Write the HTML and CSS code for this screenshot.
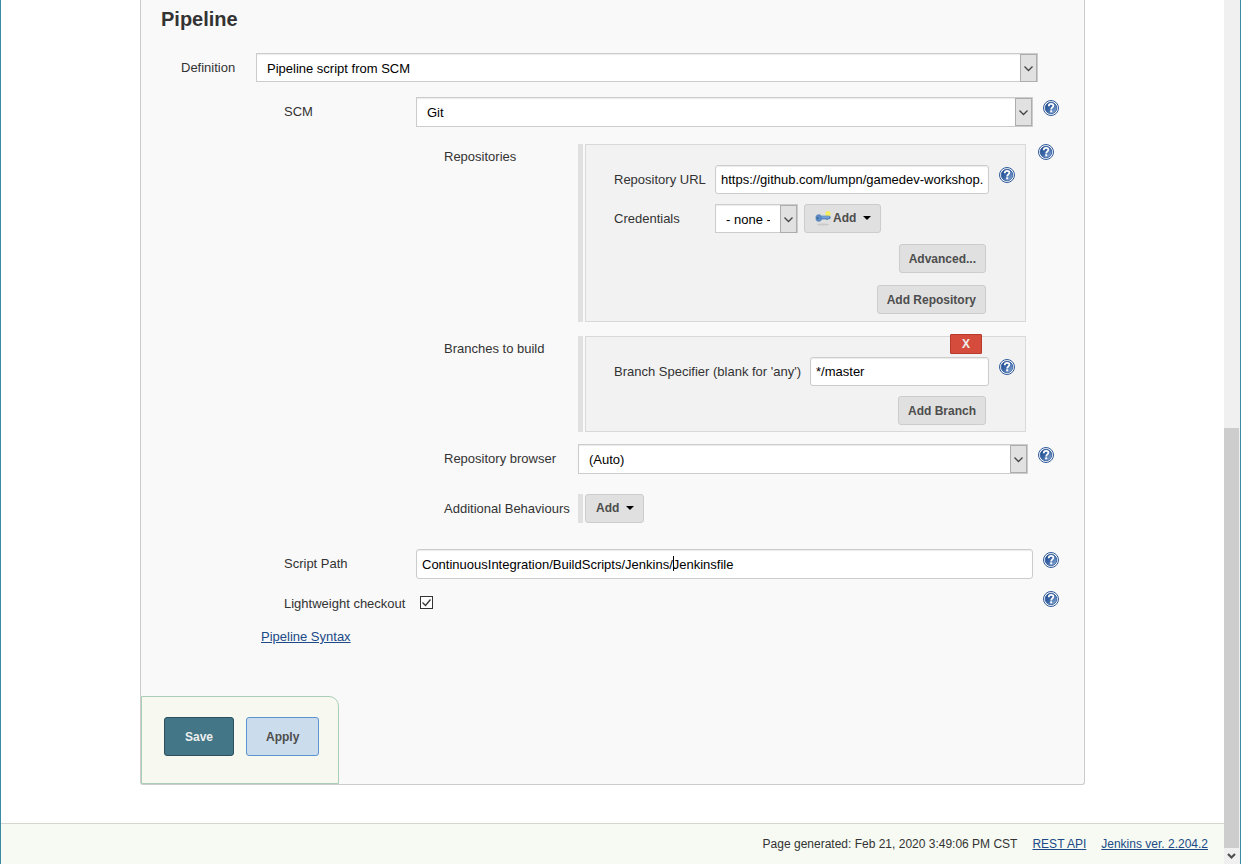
FILE: index.html
```html
<!DOCTYPE html>
<html lang="en">
<head>
    <meta charset="UTF-8">
    <meta name="viewport" content="width=device-width, initial-scale=1.0">
    <title>Config [Jenkins]</title>
    <link rel="stylesheet" href="styles.css">
</head>
<body>
    <!-- Shared icons -->
    <svg class="sprite" width="0" height="0" aria-hidden="true">
        <defs>
            <linearGradient id="help-fill" x1="0" y1="0" x2="1" y2="1">
                <stop offset="0" stop-color="#1c4587" />
                <stop offset="0.5" stop-color="#3c68a8" />
                <stop offset="1" stop-color="#9dbbe0" />
            </linearGradient>
        </defs>
        <symbol id="icon-help" viewBox="0 0 16 16">
            <circle cx="8" cy="8" r="7.5" fill="#fff" stroke="#2f5a9b" />
            <circle cx="8" cy="8" r="5.8" fill="url(#help-fill)" stroke="#2f5a9b" stroke-width="0.8" />
            <path d="M5.700 6.200C5.800 4.500 6.800 3.900 8.100 3.900c1.400 0 2.300.7 2.300 1.900 0 1.600-2.200 1.700-2.200 3.600" fill="none" stroke="#fff" stroke-width="1.800" />
            <rect x="7.200" y="10.300" width="2" height="2" fill="#fff" />
        </symbol>
        <symbol id="icon-arrow" viewBox="0 0 17 28">
            <rect x="0.5" y="0.5" width="16" height="27" fill="#e1e1e1" stroke="#adadad" />
            <path d="M4.5 12.5l4 4 4-4" fill="none" stroke="#444" stroke-width="1.3" />
        </symbol>
    </svg>

    <div class="page">
        <main class="content">
            <form class="config" onsubmit="return false">
                <h2>Pipeline</h2>

                <div class="row definition">
                    <label class="label" for="definition">Definition</label>
                    <span class="select">
                        <select id="definition"><option>Pipeline script from SCM</option></select>
                        <svg class="arrow"><use href="#icon-arrow" /></svg>
                    </span>
                </div>

                <div class="row level-1 scm">
                    <label class="label" for="scm">SCM</label>
                    <span class="select tall">
                        <select id="scm"><option>Git</option></select>
                        <svg class="arrow"><use href="#icon-arrow" /></svg>
                    </span>
                    <a class="help" href="#" aria-label="Help for SCM"><svg><use href="#icon-help" /></svg></a>
                </div>

                <div class="row level-2 repositories">
                    <span class="label">Repositories</span>
                    <div class="repeat">
                        <div class="panel">
                            <div class="field">
                                <label class="label" for="url">Repository URL</label>
                                <input class="text" id="url" type="text" value="https://github.com/lumpn/gamedev-workshop.git">
                                <a class="help" href="#" aria-label="Help for Repository URL"><svg><use href="#icon-help" /></svg></a>
                            </div>
                            <div class="field credentials">
                                <label class="label" for="credentials">Credentials</label>
                                <span class="select small">
                                    <select id="credentials"><option>- none -</option></select>
                                    <svg class="arrow"><use href="#icon-arrow" /></svg>
                                </span>
                                <button class="btn menu" type="button">
                                    <svg class="key" viewBox="0 0 16 16" aria-hidden="true">
                                        <ellipse cx="8" cy="14.5" rx="6" ry="1" fill="#c9c9c9" />
                                        <circle cx="13" cy="3.5" r="2.6" fill="#f5ee62" />
                                        <path d="M1 6.500C1.500 4.500 5 4 6.500 6H14.500L15.500 7.500 14.500 9H13L12 10 11 9H7C6 12 1.500 12 1 9.500Z" fill="#5c8cc4" stroke="#4a78b0" stroke-width="0.6" />
                                        <circle cx="2.7" cy="8" r="1" fill="#3b659a" />
                                        <path d="M7 7H14" stroke="#8bb3e0" />
                                    </svg>
                                    Add
                                    <span class="caret"></span>
                                </button>
                            </div>
                            <div class="actions"><button class="btn" type="button">Advanced...</button></div>
                            <div class="actions last"><button class="btn" type="button">Add Repository</button></div>
                        </div>
                    </div>
                    <a class="help" href="#" aria-label="Help for Repositories"><svg><use href="#icon-help" /></svg></a>
                </div>

                <div class="row level-2 branches">
                    <span class="label">Branches to build</span>
                    <div class="repeat">
                        <div class="panel">
                            <button class="delete" type="button">X</button>
                            <div class="field">
                                <label class="label" for="branch">Branch Specifier (blank for 'any')</label>
                                <input class="text" id="branch" type="text" value="*/master">
                                <a class="help" href="#" aria-label="Help for Branch Specifier"><svg><use href="#icon-help" /></svg></a>
                            </div>
                            <div class="actions"><button class="btn" type="button">Add Branch</button></div>
                        </div>
                    </div>
                    <span class="help"></span>
                </div>

                <div class="row level-2 browser">
                    <label class="label" for="browser">Repository browser</label>
                    <span class="select tall">
                        <select id="browser"><option>(Auto)</option></select>
                        <svg class="arrow"><use href="#icon-arrow" /></svg>
                    </span>
                    <a class="help" href="#" aria-label="Help for Repository browser"><svg><use href="#icon-help" /></svg></a>
                </div>

                <div class="row level-2 behaviours">
                    <span class="label">Additional Behaviours</span>
                    <div class="repeat">
                        <button class="btn menu" type="button">Add <span class="caret"></span></button>
                    </div>
                </div>

                <div class="row level-1 script-path">
                    <label class="label" for="script-path">Script Path</label>
                    <span class="editing">
                        <input class="text" id="script-path" type="text" value="ContinuousIntegration/BuildScripts/Jenkins/Jenkinsfile">
                        <span class="cursor"></span>
                    </span>
                    <a class="help" href="#" aria-label="Help for Script Path"><svg><use href="#icon-help" /></svg></a>
                </div>

                <div class="row level-1 lightweight">
                    <label class="label" for="lightweight">Lightweight checkout</label>
                    <span class="check">
                        <input id="lightweight" type="checkbox" checked>
                        <svg viewBox="0 0 13 13"><path d="M2.5 6.5l3 3 5-6" fill="none" stroke="#333" stroke-width="1.3" /></svg>
                    </span>
                    <a class="help" href="#" aria-label="Help for Lightweight checkout"><svg><use href="#icon-help" /></svg></a>
                </div>

                <a class="syntax" href="#">Pipeline Syntax</a>

                <div class="save-bar">
                    <button class="submit primary" type="submit">Save</button>
                    <button class="submit" type="button">Apply</button>
                </div>
            </form>
            <footer>
                <span>Page generated: Feb 21, 2020 3:49:06 PM CST</span>
                <a href="#">REST API</a>
                <a href="#">Jenkins ver. 2.204.2</a>
            </footer>
        </main>

        <div class="scrollbar" aria-hidden="true">
            <div class="thumb"></div>
            <svg class="down" viewBox="0 0 15 16"><path d="M4 6l3.5 3.5L11 6" fill="none" stroke="#505050" stroke-width="2.2" /></svg>
        </div>
    </div>
</body>
</html>
```
FILE: styles.css
```css
* {
    box-sizing: border-box;
}

body {
    margin: 0;
    background-color: #fff;
    color: #333;
    font-family: "Liberation Sans", Arial, Helvetica, sans-serif;
    font-size: 13px;
}

.sprite {
    position: absolute;
}

.page {
    display: flex;
    min-height: 100vh;
    border-left: 1px solid #3a8ba3;
    border-right: 1px solid #3a8ba3;
}

.content {
    flex: 1;
    min-width: 0;
    display: flex;
    flex-direction: column;
    justify-content: space-between;
}

a {
    color: #204a87;
}

/* Form */
.config {
    margin: 0 139px;
    background-color: #f9f9f9;
    border: 1px solid #ccc;
    border-top: none;
    border-radius: 0 0 3px 3px;
}

h2 {
    margin: 0;
    padding: 7px 20px 0;
    font-size: 20px;
    line-height: 24px;
}

.row {
    display: flex;
    align-items: flex-start;
    margin-right: 30px;
}

.label {
    flex: none;
    line-height: 29px;
}

.definition {
    margin: 22px 46px 0 40px;
}

.definition .label {
    width: 75px;
}

.level-1 {
    margin-left: 143px;
    margin-right: 25px;
}

.level-1 > .label {
    width: 132px;
}

.level-2 {
    margin-left: 303px;
}

.level-2 > .label {
    width: 134px;
}

.scm {
    margin-top: 15px;
}

.repositories {
    margin-top: 17px;
}

.branches {
    margin-top: 14px;
}

.repositories > .label,
.branches > .label {
    line-height: 25px;
}

.browser {
    margin-top: 12px;
}

.behaviours {
    margin-top: 20px;
}

.script-path {
    margin-top: 26px;
}

.lightweight {
    margin-top: 10px;
}

/* Help links */
.help {
    flex: none;
    width: 16px;
    height: 16px;
    margin: 3px 0 0 10px;
}

.help svg {
    display: block;
    width: 16px;
    height: 16px;
}

.repositories > .help {
    margin-top: 0;
}

.field .help {
    margin-top: 2px;
}

/* Drop-downs */
.select {
    flex: 1;
    display: grid;
    height: 29px;
}

.select.tall {
    height: 30px;
}

.select.small {
    flex: none;
    width: 83px;
}

.select select,
.arrow {
    grid-area: 1 / 1;
}

.select select {
    appearance: none;
    width: 100%;
    padding: 1px 27px 0 10px;
    border: 1px solid #ccc;
    border-radius: 0;
    background-color: #fff;
    box-shadow: inset 0 1px 1px rgba(0, 0, 0, 0.08);
    color: #000;
    font: inherit;
}

.arrow {
    justify-self: end;
    align-self: center;
    width: 17px;
    height: 28px;
    margin-right: 1px;
    pointer-events: none;
}

/* Text boxes */
.text {
    flex: 1;
    width: 100%;
    min-width: 0;
    height: 29px;
    padding: 0 5px;
    border: 1px solid #ccc;
    border-radius: 3px;
    background-color: #fff;
    box-shadow: inset 0 1px 1px rgba(0, 0, 0, 0.08);
    color: #000;
    font: inherit;
}

.editing {
    position: relative;
    flex: 1;
}

.editing .text {
    display: block;
    height: 30px;
}

.cursor {
    position: absolute;
    left: 257px;
    top: 7px;
    width: 1px;
    height: 15px;
    background-color: #000;
}

/* Repeatable blocks */
.repeat {
    flex: 1;
    padding-left: 2px;
    border-left: 5px solid #e0e0e0;
}

.repositories .repeat,
.branches .repeat {
    margin-right: 2px;
}

.panel {
    position: relative;
    padding: 20px 10px 7px 28px;
    border: 1px solid #d9d9d9;
    background-color: #f2f2f2;
}

.field {
    display: flex;
    align-items: flex-start;
    margin-bottom: 10px;
}

.field .label {
    min-width: 92px;
    margin-right: 9px;
}

.credentials {
    margin-bottom: 11px;
}

.actions {
    display: flex;
    justify-content: flex-end;
    padding-right: 29px;
}

.actions.last {
    margin-top: 12px;
}

.branches .panel {
    padding-bottom: 6px;
}

/* Buttons */
.btn {
    height: 29px;
    padding: 0 9px;
    border: 1px solid #ccc;
    border-radius: 3px;
    background-color: #e0e0e0;
    color: #4d4d4d;
    font: bold 12px "Liberation Sans", Arial, sans-serif;
}

.btn.menu {
    display: flex;
    align-items: center;
    padding: 0 9px 1px 10px;
}

.credentials .btn {
    margin-left: 6px;
}

.key {
    width: 16px;
    height: 16px;
    margin-right: 2px;
}

.caret {
    margin-left: 7px;
    border: 4px solid transparent;
    border-top-color: #000;
    border-bottom: none;
}

.delete {
    position: absolute;
    top: -3px;
    right: 43px;
    width: 32px;
    height: 20px;
    padding: 0;
    border: 1px solid #b83a2b;
    border-radius: 1px;
    background-color: #d54c3c;
    color: #eee;
    font: bold 12px "Liberation Sans", Arial, sans-serif;
}

/* Tick box */
.check {
    flex: 1;
    display: grid;
    padding: 7px 0 0 4px;
}

.check input,
.check svg {
    grid-area: 1 / 1;
    width: 13px;
    height: 13px;
    margin: 0;
}

.check input {
    appearance: none;
    border: 1px solid #333;
    background-color: #fff;
}

.check svg {
    pointer-events: none;
}

.lightweight .help {
    margin-top: 2px;
}

.syntax {
    display: block;
    width: max-content;
    margin: 11px 0 0 120px;
    line-height: 16px;
}

/* Save / Apply */
.save-bar {
    display: flex;
    gap: 12px;
    width: max-content;
    margin-top: 51px;
    padding: 20px 19px 27px 22px;
    border: 1px solid #a9cdb6;
    border-radius: 0 10px 0 0;
    background-color: #f7f8ef;
}

.submit {
    min-width: 70px;
    height: 39px;
    padding: 0 19px;
    border: 1px solid #5c93d1;
    border-radius: 3px;
    background-color: #cbdcec;
    color: #4d4d4d;
    font: bold 12px "Liberation Sans", Arial, sans-serif;
}

.submit.primary {
    border-color: #2c4f60;
    background-color: #437686;
    color: #eee;
}

footer {
    display: flex;
    justify-content: flex-end;
    gap: 15px;
    padding: 12px 16px;
    border-top: 1px solid #d3d7cf;
    background-color: #f6faf2;
    font-size: 12px;
    line-height: 16px;
}

/* Window scrollbar */
.scrollbar {
    display: flex;
    flex-direction: column;
    justify-content: flex-end;
    width: 16px;
    background-color: #f0f0f0;
}

.thumb {
    width: 15px;
    height: 420px;
    background-color: #cdcdcd;
}

.down {
    width: 15px;
    height: 16px;
}
```
